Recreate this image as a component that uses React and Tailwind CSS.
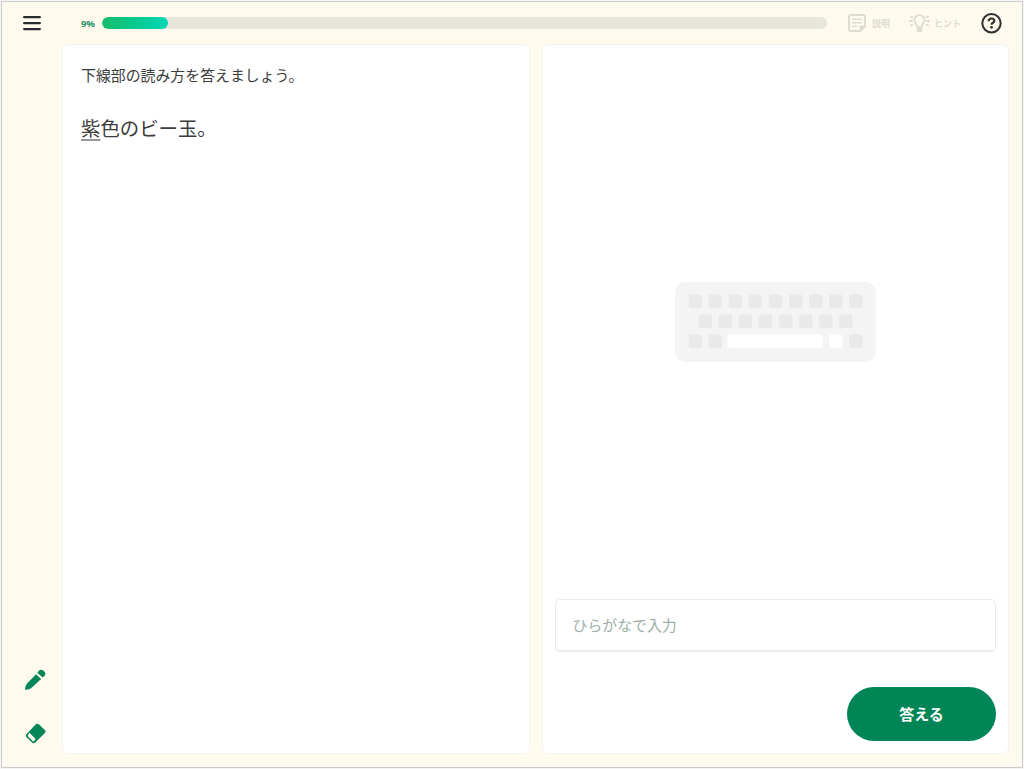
import React, { useState } from 'react';

const KEY_ROWS = [
  { y: 13, xs: [13.5, 33.5, 53.5, 73.7, 93.8, 114, 134, 154, 174] },
  { y: 33, xs: [23.5, 43.7, 63.7, 83.7, 104, 124, 144, 164] },
  { y: 53, xs: [13.5, 33.5, 174] }
];

const KeyboardIllustration = () => (
  <svg width="201" height="80" viewBox="0 0 201 80">
    <rect width="201" height="80" rx="10" fill="#f4f4f4" />
    {KEY_ROWS.map((row) =>
      row.xs.map((x) => (
        <rect key={`${row.y}-${x}`} x={x} y={row.y - 0.4} width="13.5" height="13.5" rx="2.5" fill="#e9e9e9" />
      ))
    )}
    <rect x="52.5" y="52.6" width="95" height="13.5" rx="2.5" fill="#fff" />
    <rect x="154" y="52.6" width="13.5" height="13.5" rx="2.5" fill="#fff" />
  </svg>
);

const MenuIcon = () => (
  <svg width="18" height="15" viewBox="0 0 18 15" fill="none" stroke="#2a2d2d" strokeWidth="2.3" strokeLinecap="round">
    <path d="M1.2 1.2h15.6M1.2 7.2h15.6M1.2 13.2h15.6" />
  </svg>
);

const NoteIcon = () => (
  <svg width="18" height="18" viewBox="0 0 18 18" fill="none" stroke="#dddcd1" strokeWidth="1.9" strokeLinecap="round" strokeLinejoin="round">
    <path d="M12.3 17H2.8A1.8 1.8 0 0 1 1 15.2V2.8A1.8 1.8 0 0 1 2.8 1h12.4A1.8 1.8 0 0 1 17 2.8v9.5z" />
    <path d="M12.5 16.5v-4h4z" fill="#dddcd1" />
    <path d="M4.800 5.200h8.400M4.800 8.700h8.400M4.800 12.200h4" strokeWidth="1.5" />
  </svg>
);

const BulbIcon = () => (
  <svg width="21" height="18" viewBox="0 0 21 18" fill="none" stroke="#dddcd1" strokeWidth="1.8" strokeLinecap="round" strokeLinejoin="round">
    <path d="M8.2 12.8c0-1.700-.6-2.300-1.500-3.400a5 5 0 1 1 7.600 0c-.9 1.100-1.500 1.700-1.500 3.400z" />
    <path d="M8.5 15h4v.8a2 2 0 0 1-4 0z" fill="#dddcd1" />
    <path d="M1 7h2M18 7h2M1.800 2.400l1.700.8M19.200 2.400l-1.700.8M1.800 11.600l1.700-.8M19.200 11.600l-1.700-.8" />
  </svg>
);

const HelpIcon = () => (
  <svg width="21" height="21" viewBox="0 0 21 21" fill="none" stroke="#2f3131">
    <circle cx="10.5" cy="10.2" r="9.2" strokeWidth="2" />
    <path d="M7.7 8.200c0-1.700 1.200-2.700 2.800-2.700s2.800.9 2.800 2.400c0 1.900-2.800 1.800-2.800 3.800" strokeWidth="2.2" />
    <circle cx="10.5" cy="14.3" r="1.4" fill="#2f3131" stroke="none" />
  </svg>
);

const PencilIcon = () => (
  <svg width="22" height="22" viewBox="0 0 22 22" fill="#068659">
    <path d="M1.100 20.8c0-2.700.6-4.700 2.200-6.500L12.100 5.300l5 4.800-9.200 8.500c-1.700 1.500-4.100 2.300-6.800 2.200z" />
    <path d="M13.700 4.300c-.3-.4-.2-.8.1-1.200l1-1.200c1-1.300 2.500-1.500 4-.7 1.400.8 2.500 2.100 2.600 3.500.1.900-.4 1.700-1.100 2.300l-1.100.9c-.5.4-1 .3-1.400-.1z" />
  </svg>
);

const EraserIcon = () => (
  <svg width="22" height="22" viewBox="0 0 22 22">
    <path d="M11.8 1.300c.9-.9 2.100-.9 3 0l6.100 5.700c.9.900.9 2 0 2.900l-9.600 9.700c-1 1-2.300 1-3.300 0l-5.300-5.200c-1-1-1-2.300-.1-3.300z" fill="#068659" />
    <path d="M5.700 10l5.300 5.200c.5.500.5 1.100.1 1.600l-1 1.200c-.5.500-1 .5-1.500 0l-4.300-4.300c-.5-.5-.5-1.100-.1-1.600l.7-1.800c.2-.4.500-.5.800-.3z" fill="#fffbef" />
  </svg>
);

const App = () => {
  const [answer, setAnswer] = useState('');
  const progress = 9;

  return (
    <div className="h-screen w-screen overflow-hidden bg-[#f5f5f5] p-px font-['Noto_Sans_CJK_JP',sans-serif]">
      <div className="flex h-full flex-col border border-[#cbcbcb] bg-[#fffaee]">
        <header className="flex h-[42px] shrink-0 items-center pr-5 pl-[21px]">
          <button type="button" aria-label="メニュー">
            <MenuIcon />
          </button>
          <span className="ml-10 w-[20px] pt-0.5 text-left font-['Open_Sans',sans-serif] text-[9.5px] font-bold tracking-[-0.1px] text-[#259467]">
            {progress}%
          </span>
          <div className="ml-px flex-1 pr-[21px]">
            <div className="h-3 overflow-hidden rounded-full bg-[#e8e5da]">
              <div className="h-full rounded-full bg-linear-to-r from-[#15bd69] to-[#00d7b4]" style={{ width: `${progress + 0.1}%` }}></div>
            </div>
          </div>
          <div className="flex items-center gap-1.5 text-[9px] leading-none font-bold text-[#dddcd1]">
            <NoteIcon />
            <span>説明</span>
          </div>
          <div className="ml-[19px] flex items-center gap-1 text-[9px] leading-none font-bold text-[#dddcd1]">
            <BulbIcon />
            <span>ヒント</span>
          </div>
          <button type="button" className="ml-5" aria-label="ヘルプ">
            <HelpIcon />
          </button>
        </header>

        <div className="flex min-h-0 flex-1 pr-[13px] pb-[13px]">
          <aside className="flex w-[60px] shrink-0 flex-col items-center justify-end gap-8 pl-1.5">
            <button type="button" aria-label="ペン">
              <PencilIcon />
            </button>
            <button type="button" className="mb-[9px]" aria-label="消しゴム">
              <EraserIcon />
            </button>
          </aside>

          <main className="grid min-w-0 flex-1 grid-cols-2 gap-3">
            <section className="rounded-md border border-[#f1f3ee] bg-white px-[18px] pt-[19px] text-[#3c3c3c]">
              <p className="text-[14.9px] leading-[22px]">下線部の読み方を答えましょう。</p>
              <p className="mt-[27px] text-[19.4px] leading-[30px]">
                <span className="underline decoration-[#999] decoration-2 underline-offset-[3px]">紫</span>色のビー玉。
              </p>
            </section>

            <section className="flex flex-col rounded-md border border-[#f1f3ee] bg-white px-3 pb-3">
              <div className="flex flex-1 items-center justify-center">
                <KeyboardIllustration />
              </div>
              <input
                type="text"
                value={answer}
                onChange={(e) => setAnswer(e.target.value)}
                placeholder="ひらがなで入力"
                className="h-[53px] w-full rounded-[5px] border-[1.5px] border-b-2 border-[#e9eeeb] px-[17px] pb-0.5 text-[14.9px] text-[#333] outline-none placeholder:text-[#9aaea6]"
              />
              <button
                type="button"
                className="mt-[35px] h-[54px] w-[149px] self-end rounded-full bg-[#008556] text-[15px] font-bold text-white"
              >
                答える
              </button>
            </section>
          </main>
        </div>
      </div>
    </div>
  );
};

export default App;
